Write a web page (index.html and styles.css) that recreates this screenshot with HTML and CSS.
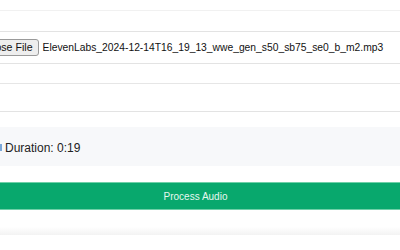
FILE: index.html
```html
<!DOCTYPE html>
<html>
<head>
<meta charset="utf-8">
<link rel="stylesheet" href="styles.css">
</head>
<body>
<div class="page">
  <div class="top"></div>
  <div class="field file-field">
    <span class="file-btn">Choose File</span>
    <span class="file-name">ElevenLabs_2024-12-14T16_19_13_wwe_gen_s50_sb75_se0_b_m2.mp3</span>
  </div>
  <div class="field empty-field"></div>
  <div class="info">
    <span class="mark"></span>
    <span class="duration">Duration: 0:19</span>
  </div>
  <button class="process">Process Audio</button>
  <div class="card-end"></div>
</div>
</body>
</html>
```
FILE: styles.css
```css
* { box-sizing: border-box; }
html, body { margin: 0; padding: 0; background: #ffffff; }
body { font-family: Arial, "Liberation Sans", sans-serif; color: #222; overflow: hidden; }
.page { width: 400px; height: 250px; display: flex; flex-direction: column; }
.top { height: 11px; border-bottom: 1px solid #f1f1f1; flex: none; }
.field { flex: none; border-top: 1px solid #e3e3e3; border-bottom: 1px solid #e3e3e3; }
.file-field { margin-top: 20px; height: 33px; display: flex; align-items: center; }
.file-btn {
  margin-left: -31px;
  height: 17px;
  padding: 0 5px 0 6px;
  border: 1px solid #9a9a9a;
  border-radius: 3px;
  background: #eeeeee;
  font-size: 10.6px;
  line-height: 15px;
  color: #111;
  white-space: nowrap;
}
.file-name { margin-left: 4px; font-size: 10.3px; color: #111; white-space: nowrap; }
.empty-field { margin-top: 19px; height: 29px; border-top-color: #e6e6e6; }
.info {
  flex: none;
  margin-top: 15px;
  height: 39px;
  background: #f7f8fa;
  display: flex;
  align-items: center;
  padding-top: 2px;
}
.mark { width: 2px; height: 7px; background: #7aa7d9; flex: none; }
.duration { margin-left: 3px; font-size: 12px; color: #222; }
.process {
  flex: none;
  margin-top: 16px;
  margin-left: -9px;
  height: 28px;
  width: 409px;
  border: none;
  border-top: 1px solid #6fd0a8;
  border-bottom: 1px solid #6fd0a8;
  background: #08a86d;
  color: #e6f7ef;
  font-family: Arial, "Liberation Sans", sans-serif;
  font-size: 10px;
  padding: 0;
}
.card-end {
  flex: none;
  margin-top: 17px;
  height: 8px;
  background: linear-gradient(#ffffff, #f3f3f3);
}
```
